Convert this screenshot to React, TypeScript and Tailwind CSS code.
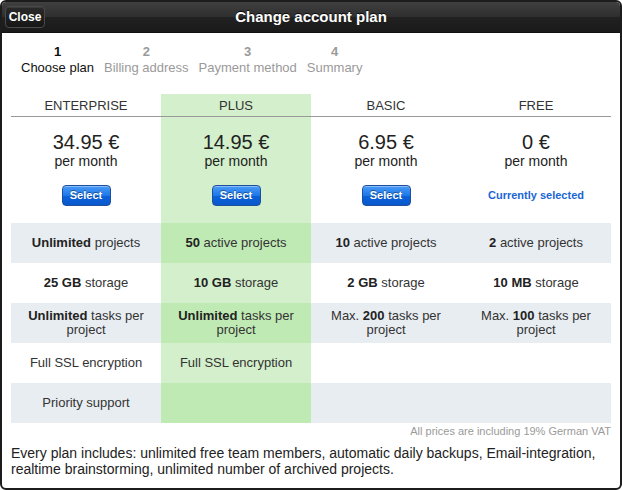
const plans = [
  { name: 'ENTERPRISE', price: '34.95 €', current: false },
  { name: 'PLUS', price: '14.95 €', current: false, highlight: true },
  { name: 'BASIC', price: '6.95 €', current: false },
  { name: 'FREE', price: '0 €', current: true },
];

type Cell = { b?: string; t?: string; pre?: string } | null;

const rows: Cell[][] = [
  [
    { b: 'Unlimited', t: ' projects' },
    { b: '50', t: ' active projects' },
    { b: '10', t: ' active projects' },
    { b: '2', t: ' active projects' },
  ],
  [
    { b: '25 GB', t: ' storage' },
    { b: '10 GB', t: ' storage' },
    { b: '2 GB', t: ' storage' },
    { b: '10 MB', t: ' storage' },
  ],
  [
    { b: 'Unlimited', t: ' tasks per project' },
    { b: 'Unlimited', t: ' tasks per project' },
    { pre: 'Max. ', b: '200', t: ' tasks per project' },
    { pre: 'Max. ', b: '100', t: ' tasks per project' },
  ],
  [{ t: 'Full SSL encryption' }, { t: 'Full SSL encryption' }, null, null],
  [{ t: 'Priority support' }, null, null, null],
];

const steps = [
  { n: '1', label: 'Choose plan', active: true },
  { n: '2', label: 'Billing address' },
  { n: '3', label: 'Payment method' },
  { n: '4', label: 'Summary' },
];

const SelectButton = () => (
  <button className="h-[21px] w-[49px] rounded-[4px] border border-[#1e4f9c] bg-[linear-gradient(#4a9bf5,#1d78ea_50%,#0b62db_51%,#0a58cc)] text-[11px] font-bold text-white [text-shadow:0_-1px_0_rgba(0,0,0,0.4)] shadow-[inset_0_1px_0_rgba(255,255,255,0.35)]">
    Select
  </button>
);

export default function App() {
  return (
    <div className="h-[490px] w-[622px] overflow-hidden rounded-[6px] border-2 border-[#1c1c1c] bg-white font-['Liberation_Sans',Arial,sans-serif] text-[#333]">
      <div className="relative flex h-[31px] items-center justify-center border-b border-[#111] bg-[linear-gradient(#404040,#2e2e2e_50%,#212121_51%,#1a1a1a)]">
        <button className="absolute left-[3px] top-[4px] h-[22px] w-[40px] rounded-[4px] border border-[#4a4a4a] bg-[linear-gradient(#2a2a2a,#161616)] text-[12px] font-bold text-white shadow-[inset_0_1px_0_rgba(255,255,255,0.08)]">
          Close
        </button>
        <h1 className="text-[15px] font-bold text-white [text-shadow:0_-1px_0_rgba(0,0,0,0.8)]">Change account plan</h1>
      </div>

      <div className="flex gap-[10px] pl-[19px] pt-[11px]">
        {steps.map((s) => (
          <div key={s.n} className={`text-center text-[13px] leading-[16px] ${s.active ? 'text-[#111]' : 'text-[#9a9a9a]'}`}>
            <div className="font-bold">{s.n}</div>
            <div>{s.label}</div>
          </div>
        ))}
      </div>

      <div className="mx-[9px] mt-[18px] grid grid-cols-4">
        {plans.map((p) => (
          <div key={p.name} className={`border-b border-[#999] pt-[4px] pb-[3px] text-center text-[13px] leading-[15px] text-[#333] ${p.highlight ? 'bg-[#d3efcb]' : ''}`}>
            {p.name}
          </div>
        ))}
        {plans.map((p) => (
          <div key={p.name} className={`flex flex-col items-center pt-[14px] pb-[17px] ${p.highlight ? 'bg-[#d3efcb]' : ''}`}>
            <div className="text-[20px] leading-[22px] text-[#222]">{p.price}</div>
            <div className="text-[14px] leading-[16px] text-[#222]">per month</div>
            <div className="mt-[16px] flex h-[21px] items-center">
              {p.current ? (
                <span className="text-[11px] font-bold text-[#1a66d4]">Currently selected</span>
              ) : (
                <SelectButton />
              )}
            </div>
          </div>
        ))}
        {rows.map((row, i) =>
          row.map((c, j) => {
            const odd = i % 2 === 0;
            const bg = j === 1 ? (odd ? 'bg-[#c0eab4]' : 'bg-[#d3efcb]') : odd ? 'bg-[#e8edf1]' : 'bg-white';
            return (
              <div key={`${i}-${j}`} className={`flex h-[40px] items-center justify-center px-[14px] text-center text-[13px] leading-[14px] text-[#333] ${bg}`}>
                {c && (
                  <span>
                    {c.pre}
                    {c.b && <b className="text-[#222]">{c.b}</b>}
                    {c.t}
                  </span>
                )}
              </div>
            );
          })
        )}
      </div>

      <div className="mr-[9px] mt-[1px] text-right text-[11px] leading-[14px] text-[#9a9a9a]">All prices are including 19% German VAT</div>
      <p className="mt-[7px] px-[9px] text-[14px] leading-[16px] text-[#222]">
        Every plan includes: unlimited free team members, automatic daily backups, Email-integration, realtime brainstorming, unlimited number of archived projects.
      </p>
    </div>
  );
}
